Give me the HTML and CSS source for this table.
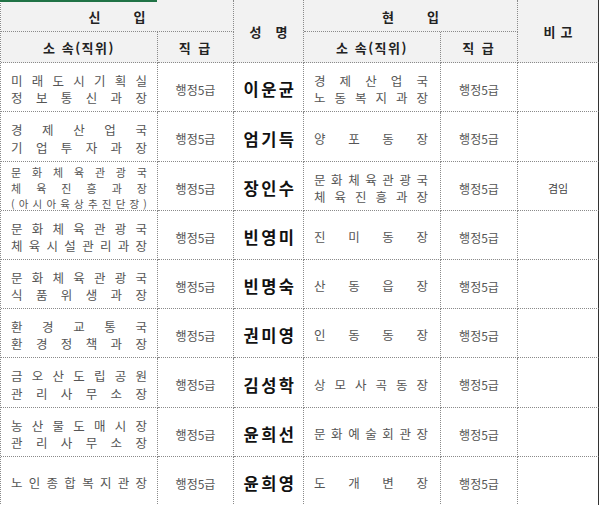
FILE: index.html
```html
<!DOCTYPE html>
<html lang="ko">
<head>
<meta charset="utf-8">
<link rel="stylesheet" href="styles.css">
</head>
<body>
<div class="sheet">
  <div class="sel-mark"></div>
  <div class="grid">
    <div class="c h h-new"><span class="wide">신</span><span>입</span></div>
    <div class="c h h-name"><span class="mid">성</span><span>명</span></div>
    <div class="c h h-cur"><span class="wide">현</span><span>입</span></div>
    <div class="c h h-note"><span class="sm">비</span><span>고</span></div>
    <div class="c h h-sub spaced">소 속(직위)</div>
    <div class="c h h-sub spaced2">직 급</div>
    <div class="c h h-sub spaced">소 속(직위)</div>
    <div class="c h h-sub spaced2">직 급</div>

    <!-- row 1 -->
    <div class="c org"><div class="jl"><span>미</span><span>래</span><span>도</span><span>시</span><span>기</span><span>획</span><span>실</span></div><div class="jl"><span>정</span><span>보</span><span>통</span><span>신</span><span>과</span><span>장</span></div></div>
    <div class="c grade">행정5급</div>
    <div class="c name">이운균</div>
    <div class="c org r"><div class="jl"><span>경</span><span>제</span><span>산</span><span>업</span><span>국</span></div><div class="jl"><span>노</span><span>동</span><span>복</span><span>지</span><span>과</span><span>장</span></div></div>
    <div class="c grade">행정5급</div>
    <div class="c note"></div>

    <!-- row 2 -->
    <div class="c org"><div class="jl"><span>경</span><span>제</span><span>산</span><span>업</span><span>국</span></div><div class="jl"><span>기</span><span>업</span><span>투</span><span>자</span><span>과</span><span>장</span></div></div>
    <div class="c grade">행정5급</div>
    <div class="c name">엄기득</div>
    <div class="c org r"><div class="jl"><span>양</span><span>포</span><span>동</span><span>장</span></div></div>
    <div class="c grade">행정5급</div>
    <div class="c note"></div>

    <!-- row 3 -->
    <div class="c org three"><div class="jl"><span>문</span><span>화</span><span>체</span><span>육</span><span>관</span><span>광</span><span>국</span></div><div class="jl"><span>체</span><span>육</span><span>진</span><span>흥</span><span>과</span><span>장</span></div><div class="jl small"><span>(</span><span>아</span><span>시</span><span>아</span><span>육</span><span>상</span><span>추</span><span>진</span><span>단</span><span>장</span><span>)</span></div></div>
    <div class="c grade">행정5급</div>
    <div class="c name">장인수</div>
    <div class="c org r"><div class="jl"><span>문</span><span>화</span><span>체</span><span>육</span><span>관</span><span>광</span><span>국</span></div><div class="jl"><span>체</span><span>육</span><span>진</span><span>흥</span><span>과</span><span>장</span></div></div>
    <div class="c grade">행정5급</div>
    <div class="c note">겸임</div>

    <!-- row 4 -->
    <div class="c org"><div class="jl"><span>문</span><span>화</span><span>체</span><span>육</span><span>관</span><span>광</span><span>국</span></div><div class="jl"><span>체</span><span>육</span><span>시</span><span>설</span><span>관</span><span>리</span><span>과</span><span>장</span></div></div>
    <div class="c grade">행정5급</div>
    <div class="c name">빈영미</div>
    <div class="c org r"><div class="jl"><span>진</span><span>미</span><span>동</span><span>장</span></div></div>
    <div class="c grade">행정5급</div>
    <div class="c note"></div>

    <!-- row 5 -->
    <div class="c org"><div class="jl"><span>문</span><span>화</span><span>체</span><span>육</span><span>관</span><span>광</span><span>국</span></div><div class="jl"><span>식</span><span>품</span><span>위</span><span>생</span><span>과</span><span>장</span></div></div>
    <div class="c grade">행정5급</div>
    <div class="c name">빈명숙</div>
    <div class="c org r"><div class="jl"><span>산</span><span>동</span><span>읍</span><span>장</span></div></div>
    <div class="c grade">행정5급</div>
    <div class="c note"></div>

    <!-- row 6 -->
    <div class="c org"><div class="jl"><span>환</span><span>경</span><span>교</span><span>통</span><span>국</span></div><div class="jl"><span>환</span><span>경</span><span>정</span><span>책</span><span>과</span><span>장</span></div></div>
    <div class="c grade">행정5급</div>
    <div class="c name">권미영</div>
    <div class="c org r"><div class="jl"><span>인</span><span>동</span><span>동</span><span>장</span></div></div>
    <div class="c grade">행정5급</div>
    <div class="c note"></div>

    <!-- row 7 -->
    <div class="c org"><div class="jl"><span>금</span><span>오</span><span>산</span><span>도</span><span>립</span><span>공</span><span>원</span></div><div class="jl"><span>관</span><span>리</span><span>사</span><span>무</span><span>소</span><span>장</span></div></div>
    <div class="c grade">행정5급</div>
    <div class="c name">김성학</div>
    <div class="c org r"><div class="jl"><span>상</span><span>모</span><span>사</span><span>곡</span><span>동</span><span>장</span></div></div>
    <div class="c grade">행정5급</div>
    <div class="c note"></div>

    <!-- row 8 -->
    <div class="c org"><div class="jl"><span>농</span><span>산</span><span>물</span><span>도</span><span>매</span><span>시</span><span>장</span></div><div class="jl"><span>관</span><span>리</span><span>사</span><span>무</span><span>소</span><span>장</span></div></div>
    <div class="c grade">행정5급</div>
    <div class="c name">윤희선</div>
    <div class="c org r"><div class="jl"><span>문</span><span>화</span><span>예</span><span>술</span><span>회</span><span>관</span><span>장</span></div></div>
    <div class="c grade">행정5급</div>
    <div class="c note"></div>

    <!-- row 9 -->
    <div class="c org"><div class="jl"><span>노</span><span>인</span><span>종</span><span>합</span><span>복</span><span>지</span><span>관</span><span>장</span></div></div>
    <div class="c grade">행정5급</div>
    <div class="c name">윤희영</div>
    <div class="c org r"><div class="jl"><span>도</span><span>개</span><span>변</span><span>장</span></div></div>
    <div class="c grade">행정5급</div>
    <div class="c note"></div>
  </div>
</div>
</body>
</html>
```

FILE: styles.css
```css
html, body {
  margin: 0;
  padding: 0;
  background: #ffffff;
}
body {
  font-family: "Noto Sans CJK KR", "Noto Sans", sans-serif;
  color: #333;
}
.sheet {
  position: relative;
  width: 600px;
  height: 505px;
  overflow: hidden;
}
.sel-mark {
  position: absolute;
  left: 0;
  top: 0;
  width: 157px;
  height: 2px;
  background: #217346;
  z-index: 2;
}
.grid {
  display: grid;
  width: 598px;
  grid-template-columns: 157px 76px 70px 137px 77px 81px;
  grid-template-rows: 32px 31px 49px 50px 49px 49px 49px 49px 50px 49px 49px;
  border-left: 1px dotted #8a8a8a;
  box-sizing: border-box;
}
.c {
  box-sizing: border-box;
  border-right: 1px dotted #8a8a8a;
  border-bottom: 1px dotted #8a8a8a;
  display: flex;
  align-items: center;
  justify-content: center;
  font-size: 12px;
  line-height: 1;
  padding-top: 5px;
}
.h {
  background: #f2f2f2;
  font-weight: 700;
  font-size: 13px;
  color: #222;
  padding-top: 1px;
}
.h .wide { margin-right: 33px; }
.h .mid { margin-right: 14px; }
.h .sm { margin-right: 5px; }
.h.spaced { letter-spacing: 1.5px; }
.h.spaced2 { letter-spacing: 2px; }
.h-new { grid-column: 1 / 3; }
.h-name { grid-column: 3; grid-row: 1 / 3; }
.h-cur { grid-column: 4 / 6; }
.h-note { grid-column: 6; grid-row: 1 / 3; border-right: 1px solid #333; }
.note { border-right: 1px solid #333; color: #444; font-size: 11px; }
.org {
  flex-direction: column;
  align-items: stretch;
  padding: 5px 10px 0 10px;
  gap: 5px;
  color: #555;
  font-size: 12.5px;
}
.org.r { padding: 5px 12px 0 10px; }
.org.three { gap: 0; line-height: 16px; font-size: 11px; padding-top: 3px; }
.jl {
  display: flex;
  justify-content: space-between;
}
.jl.small { font-size: 10.5px; }
.grade {
  color: #555;
  font-size: 12px;
}
.name {
  font-weight: 700;
  font-size: 16.5px;
  letter-spacing: 2.5px;
  color: #111;
  padding-left: 3px;
}
```
